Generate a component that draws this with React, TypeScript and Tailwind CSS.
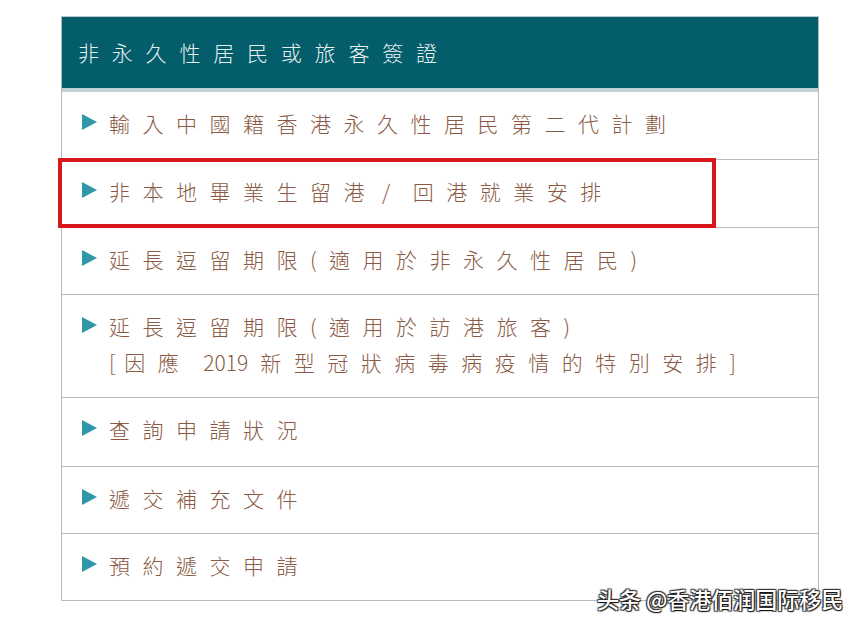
const rows: { lines: React.ReactNode[]; h: string; boxed?: boolean }[] = [
  { lines: ["輸入中國籍香港永久性居民第二代計劃"], h: "h-[68px]" },
  {
    lines: [
      <>
        非本地畢業生留港<span className="ml-[5px] mr-[10px]">/</span>回港就業安排
      </>,
    ],
    h: "h-[68px]",
    boxed: true,
  },
  { lines: ["延長逗留期限(適用於非永久性居民)"], h: "h-[67px]" },
  {
    lines: [
      "延長逗留期限(適用於訪港旅客)",
      <>
        <span className="tracking-[2px]">[ </span>
        因應<span className="tracking-normal ml-[12px] mr-[12px]">2019</span>新型冠狀病毒病疫情的特別安排]
      </>,
    ],
    h: "h-[103px]",
  },
  { lines: ["查詢申請狀況"], h: "h-[69px]" },
  { lines: ["遞交補充文件"], h: "h-[67px]" },
  { lines: ["預約遞交申請"], h: "h-[67px]" },
];

const Triangle = () => (
  <svg width="17" height="18" viewBox="0 0 17 18" className="shrink-0">
    <path d="M1 1 L16 9 L1 17 Z" fill="#2e98a9" />
  </svg>
);

export default function App() {
  return (
    <div
      className="relative w-[859px] h-[627px] bg-white pt-4 overflow-hidden"
      style={{ fontFamily: '"Noto Sans CJK TC", "Noto Sans", sans-serif' }}
    >
      <div className="ml-[61px] w-[758px] border-x border-[#b8b8b8]">
        <div className="h-[76px] bg-[#035d6a] border-t border-[#b9c9cc] border-b-4 border-b-[#c3d2d4] flex items-center pl-[16px]">
          <span className="text-[21px] font-light tracking-[12.8px] text-[#e8f1f1]">
            非永久性居民或旅客簽證
          </span>
        </div>
        {rows.map((r, i) => (
          <div
            key={i}
            className={`relative flex items-start border-b border-[#bcbcbc] pl-[19px] pt-[16px] ${r.h}`}
          >
            <div className="mt-[5px]">
              <Triangle />
            </div>
            <div className="ml-[11px] flex flex-col text-[21px] font-light tracking-[12.5px] text-[#8a5a44] leading-[36px] -mt-[3px]">
              {r.lines.map((l, j) => (
                <div key={j}>{l}</div>
              ))}
            </div>
            {r.boxed && (
              <div className="absolute left-[-4px] top-[-2px] w-[658px] h-[70px] border-4 border-[#d7171c]" />
            )}
          </div>
        ))}
      </div>
      <div
        className="absolute left-[597px] top-[582px] text-[22px] font-medium text-white"
        style={{
          fontFamily: '"Noto Sans CJK SC", sans-serif',
          textShadow: "1px 1px 1px #111, -1px -1px 1px #333, 1px -1px 1px #333, -1px 1px 1px #333",
        }}
      >
        头条 @香港佰润国际移民
      </div>
    </div>
  );
}
